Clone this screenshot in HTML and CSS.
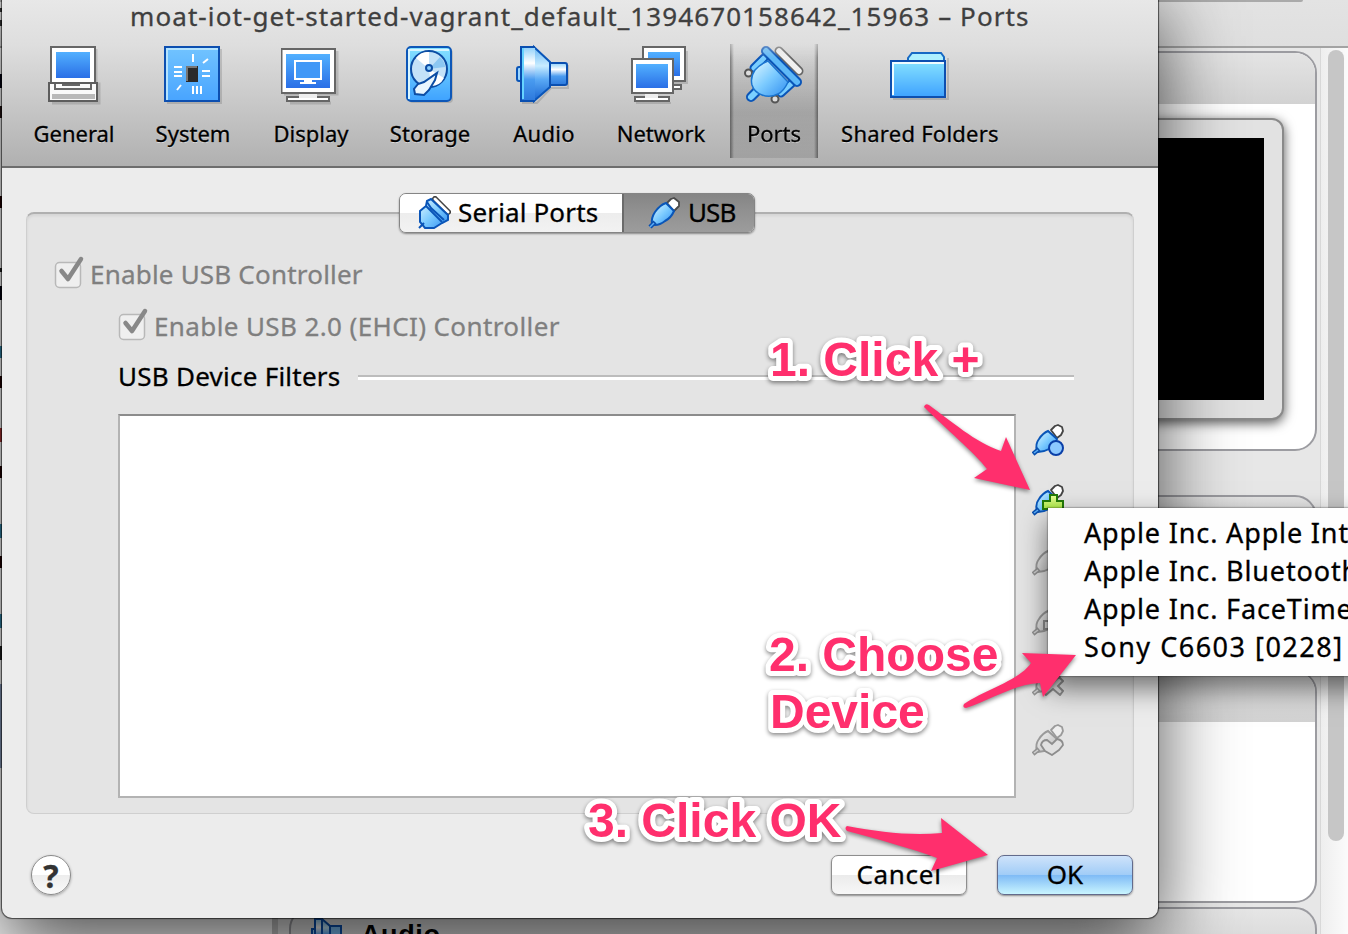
FILE: index.html
```html
<!DOCTYPE html>
<html lang="en">
<head>
<meta charset="utf-8">
<title>Ports</title>
<link rel="stylesheet" href="styles.css">
</head>
<body>
<svg class="defs" width="0" height="0">
  <defs>
    <linearGradient id="screen" x1="0" y1="0" x2="0" y2="1"><stop offset="0" stop-color="#52b0ff"/><stop offset="1" stop-color="#2a6fe6"/></linearGradient>
    <linearGradient id="sky" x1="0" y1="0" x2="0" y2="1"><stop offset="0" stop-color="#86e2ff"/><stop offset="1" stop-color="#3ea2ff"/></linearGradient>
    <linearGradient id="board" x1="0" y1="0" x2="0" y2="1"><stop offset="0" stop-color="#72c4ff"/><stop offset="1" stop-color="#48a4ff"/></linearGradient>
    <linearGradient id="horn" x1="0" y1="0" x2="0" y2="1"><stop offset="0" stop-color="#6bb8f5"/><stop offset=".35" stop-color="#c8ecff"/><stop offset=".6" stop-color="#5aa9f5"/><stop offset="1" stop-color="#1763d0"/></linearGradient>
    <linearGradient id="magnet" x1="0" y1="0" x2="0" y2="1"><stop offset="0" stop-color="#8fd0fa"/><stop offset=".3" stop-color="#ffffff"/><stop offset=".6" stop-color="#4a9cf0"/><stop offset="1" stop-color="#2c78dc"/></linearGradient>
    <linearGradient id="plug" x1="0" y1="0" x2="1" y2="1"><stop offset="0" stop-color="#e2f8ff"/><stop offset=".5" stop-color="#7ccbff"/><stop offset="1" stop-color="#2f8df0"/></linearGradient>
    <linearGradient id="grey" x1="0" y1="0" x2="1" y2="1"><stop offset="0" stop-color="#f4f4f4"/><stop offset="1" stop-color="#b9b9b9"/></linearGradient>
    <linearGradient id="green" x1="0" y1="0" x2="0" y2="1"><stop offset="0" stop-color="#eaff9a"/><stop offset="1" stop-color="#8ade1c"/></linearGradient>
    <symbol id="usb" viewBox="0 0 32 32">
      <path d="M19 6l4-4 3-1 5 4v4l-5 5z" fill="#fff" stroke="#4a4a4a" stroke-width="1.8" stroke-linejoin="round"/>
      <path d="M4 27q-1-6 3-12 5-7 11-9l8 8q-3 7-9 10-5 4-10 4z" fill="url(#plug)" stroke="#0a56b8" stroke-width="2"/>
      <path d="M2 30l5-5" stroke="#0a4fae" stroke-width="4.500"/><path d="M2 30l4-4" stroke="#5aaef8" stroke-width="1.500"/>
    </symbol>
    <symbol id="filter" viewBox="0 0 32 32">
      <path d="M19 6l4-4 3-1 4 2 1 4-2 4-4 3z" fill="#fff" stroke="#444" stroke-width="1.8" stroke-linejoin="round"/>
      <path d="M5 27q-2-7 2-12 4-6 9-8l9 8q-2 6-8 10-5 3-11 3z" fill="url(#plug)" stroke="#0a56b8" stroke-width="2"/>
      <path d="M1 30l6-5" stroke="#0a4fae" stroke-width="4.500"/><path d="M2 29l4-3" stroke="#5aaef8" stroke-width="1.500"/>
    </symbol>
    <symbol id="filter-off" viewBox="0 0 32 32">
      <path d="M19 6l4-4 3-1 4 2 1 4-2 4-4 3z" fill="#eee" stroke="#9a9a9a" stroke-width="1.8" stroke-linejoin="round"/>
      <path d="M5 27q-2-7 2-12 4-6 9-8l9 8q-2 6-8 10-5 3-11 3z" fill="url(#grey)" stroke="#9a9a9a" stroke-width="2"/>
      <path d="M1 30l6-5" stroke="#929292" stroke-width="4.500"/><path d="M2 29l4-3" stroke="#d0d0d0" stroke-width="1.500"/>
    </symbol>
  </defs>
</svg>
<div class="desktop">
  <div class="manager">
    <div class="manager-bar"><div class="manager-bar-edge"></div></div>
    <div class="manager-body">
      <div class="sidebar"></div>
      <div class="details">
        <div class="card preview"><div class="card-head"></div><div class="monitor"><div class="monitor-screen"></div></div></div>
        <div class="card middle"></div>
        <div class="card storage"><div class="card-head"></div></div>
        <div class="card audio">
          <svg width="32" height="28" viewBox="0 0 32 28"><path d="M1 12h3v12H1z" fill="#9bd6ff" stroke="#0a4fae" stroke-width="2"/><path d="M11 2l8 7v10l-8 8z" fill="url(#horn)" stroke="#0a4fae" stroke-width="2"/><path d="M19 9h11v11H19z" fill="#7cc0f7" stroke="#0a4fae" stroke-width="2"/><path d="M4 2h7v28H4z" fill="url(#magnet)" stroke="#0a4fae" stroke-width="2"/></svg>
          <span>Audio</span>
        </div>
      </div>
      <div class="scroll"><div class="thumb"></div></div>
    </div>
  </div>
  <div class="edge-strip"></div>

  <div class="dialog">
    <div class="toolbar">
      <div class="title">moat-iot-get-started-vagrant_default_1394670158642_15963 – Ports</div>
      <div class="tools">
        <div class="tool general">
          <svg width="60" height="64" viewBox="44 44 60 64">
            <path d="M52 103h47V84h-3V49" fill="none" stroke="#0002" stroke-width="3"/>
            <rect x="51" y="47" width="44" height="36" fill="#fff" stroke="#666" stroke-width="2"/>
            <rect x="56" y="52" width="34" height="26" fill="url(#screen)"/>
            <rect x="49" y="83" width="48" height="18" fill="#fafafa" stroke="#5d5d5d" stroke-width="2"/>
            <path d="M55 84v5h36v-5M62 85h18" fill="none" stroke="#666" stroke-width="2"/>
            <path d="M52 94h43v5H52z" fill="#b9b9b9"/>
          </svg><span>General</span>
        </div>
        <div class="tool system">
          <svg width="60" height="64" viewBox="163 44 60 64">
            <path d="M167 103h54V49" fill="none" stroke="#0002" stroke-width="2"/>
            <rect x="165" y="47" width="54" height="54" fill="url(#board)" stroke="#0d4fb0" stroke-width="2"/>
            <path d="M167 100V49h51" fill="none" stroke="#b4e4ff" stroke-width="2"/>
            <rect x="186" y="66" width="12" height="16" fill="#2a2a2a"/><path d="M187 81V67h10" fill="none" stroke="#777" stroke-width="2"/>
            <path d="M193 54v8M203 63l5-4M174 67h8m-8 5h8m-8 4h8M202 71h8m-8 5h8M177 90l4-5M193 86v8m4-8v8m4-8v8" stroke="#fff" stroke-width="2" fill="none"/>
          </svg><span>System</span>
        </div>
        <div class="tool display">
          <svg width="60" height="64" viewBox="281 44 60 64">
            <path d="M284 94h53V51M290 103h41" fill="none" stroke="#0002" stroke-width="3"/>
            <rect x="281.500" y="49" width="53.500" height="44" fill="#fff" stroke="#666" stroke-width="2"/>
            <rect x="286" y="54" width="44" height="34" fill="url(#screen)"/>
            <rect x="295" y="61" width="26" height="18" fill="#4299f7" stroke="#fff" stroke-width="2"/>
            <path d="M304 80h8v3h-8zM300 82h16v2h-16z" fill="#fff"/>
            <rect x="287" y="97" width="42" height="4" fill="#fff" stroke="#666" stroke-width="2"/><path d="M299 94h18v4h-18z" fill="#eee"/>
          </svg><span>Display</span>
        </div>
        <div class="tool storage-tool">
          <svg width="60" height="64" viewBox="400 44 60 64">
            <rect x="409" y="49" width="44" height="54" rx="4" fill="#0002"/>
            <rect x="407" y="47" width="44" height="54" rx="4" fill="url(#sky)" stroke="#0d57b8" stroke-width="2"/>
            <path d="M409 99V50h40" fill="none" stroke="#d8f6ff" stroke-width="2"/>
            <circle cx="429" cy="69" r="18" fill="#c4e2f8" stroke="#0c4da4" stroke-width="2"/>
            <path d="M429 69L416 58q5-7 13-6zM429 69l15 9q-4 8-13 8z" fill="#fff"/><path d="M429 69l11-12q5 5 5 10z" fill="#8cc7f2"/>
            <circle cx="429" cy="68" r="3" fill="#8bd0ff" stroke="#0c4da4" stroke-width="2"/>
            <path d="M437 73l-2 7-6 10-5 5-9-1-1-5 4-5 6-2z" fill="#eaf7ff" stroke="#0c4da4" stroke-width="2"/>
          </svg><span>Storage</span>
        </div>
        <div class="tool audio-tool">
          <svg width="60" height="64" viewBox="514 44 60 64">
            <path d="M522 103h15l14-15h17V65" fill="none" stroke="#0002" stroke-width="2"/>
            <rect x="517" y="67" width="5" height="14" rx="2" fill="#9bd6ff" stroke="#0a55b8" stroke-width="2"/>
            <path d="M534 47l16 15v25l-16 14z" fill="url(#horn)" stroke="#0a55b8" stroke-width="2"/>
            <path d="M550 63h15q2 0 2 2v18q0 2-2 2h-15z" fill="url(#magnet)" stroke="#0a4fb0" stroke-width="2"/>
            <path d="M521 47h14v54h-14z" fill="url(#magnet)"/><path d="M535 47h-14v54h14" fill="none" stroke="#0a4fb0" stroke-width="2"/><path d="M523 48v51" stroke="#66d4ff" stroke-width="2"/>
          </svg><span>Audio</span>
        </div>
        <div class="tool network">
          <svg width="60" height="64" viewBox="631 44 60 64">
            <path d="M647 83h40V51M636 103h35" fill="none" stroke="#0002" stroke-width="2"/>
            <rect x="643" y="47" width="42" height="34" fill="#fff" stroke="#666" stroke-width="2"/><rect x="648" y="52" width="32" height="24" fill="url(#screen)"/>
            <rect x="665" y="85" width="16" height="4" fill="#fff" stroke="#666" stroke-width="2"/>
            <rect x="632" y="59" width="41" height="34" fill="#fff" stroke="#666" stroke-width="2"/><rect x="636" y="64" width="32" height="24" fill="url(#screen)"/>
            <rect x="635" y="97" width="34" height="4" fill="#fff" stroke="#666" stroke-width="2"/><path d="M645 94h13v4h-13z" fill="#eee"/>
          </svg><span>Network</span>
        </div>
        <div class="tool ports selected">
          <svg width="60" height="64" viewBox="744 44 60 64">
            <path d="M779 51l20 20" stroke="#666" stroke-width="9" stroke-linecap="round"/><path d="M779 51l20 20" stroke="#f0f0f0" stroke-width="5.500" stroke-linecap="round"/>
            <path d="M764 58l-10 10M792 83l-11 10" stroke="#0a55b8" stroke-width="9" stroke-linecap="round"/><path d="M764 58l-10 10M792 83l-11 10" stroke="#79cdff" stroke-width="5" stroke-linecap="round"/>
            <circle cx="748.500" cy="73" r="3.500" fill="#ddd" stroke="#555" stroke-width="2"/><circle cx="775" cy="99" r="3.500" fill="#ddd" stroke="#555" stroke-width="2"/>
            <path d="M758 90l-7 7" stroke="#0a55b8" stroke-width="10" stroke-linecap="round"/><path d="M758 90l-7 7" stroke="#7bd0ff" stroke-width="6" stroke-linecap="round"/>
            <path d="M768 61l20 21q-4 9-10 12-8 4-16 1-8-3-10-10-2-8 3-15 5-6 13-9z" fill="url(#plug)" stroke="#1a74d0" stroke-width="1.500"/>
            <path d="M766 51l31 31" stroke="#0a55b8" stroke-width="10" stroke-linecap="round"/><path d="M766 51l31 31" stroke="#5fb9f8" stroke-width="6" stroke-linecap="round"/>
          </svg><span>Ports</span>
        </div>
        <div class="tool shared">
          <svg width="60" height="64" viewBox="890 44 60 64">
            <path d="M893 99h55V58" fill="none" stroke="#0002" stroke-width="2"/>
            <path d="M908 61v-3l4-5h29l3 4v5z" fill="#aef0ff" stroke="#1769c4" stroke-width="2"/>
            <rect x="891" y="61" width="54" height="36" fill="url(#sky)" stroke="#0d4fb0" stroke-width="2"/>
            <path d="M893 95V63h51" fill="none" stroke="#effcff" stroke-width="2"/>
          </svg><span>Shared Folders</span>
        </div>
      </div>
    </div>

    <div class="content">
      <div class="tabs">
        <div class="tab serial">
          <svg width="34" height="34" viewBox="0 0 34 34">
            <path d="M18 3l13 13" stroke="#444" stroke-width="6" stroke-linecap="round"/><path d="M18 3l13 13" stroke="#fff" stroke-width="3" stroke-linecap="round"/>
            <path d="M10 5l4-2 17 16v5l-6 3-8 5H8l-5-6V15l6-5z" fill="url(#plug)" stroke="#0a55b8" stroke-width="2"/>
            <path d="M10 6l4 6 13 12M9 10l16 16M7 27l-5 5" fill="none" stroke="#0a55b8" stroke-width="2"/>
          </svg><span>Serial Ports</span>
        </div>
        <div class="tab usb-tab"><svg width="32" height="32"><use href="#usb"/></svg><span>USB</span></div>
      </div>
      <div class="panel">
        <div class="check"><svg width="32" height="34" viewBox="0 0 32 34"><rect x="1.500" y="7.500" width="25" height="25" rx="4" fill="#efefef" stroke="#b8b8b8" stroke-width="1.500"/><path d="M7.500 16l6.500 8L27 4" fill="none" stroke="#888" stroke-width="4.500" stroke-linecap="round" stroke-linejoin="round"/></svg><span>Enable USB Controller</span></div>
        <div class="check nested"><svg width="32" height="34" viewBox="0 0 32 34"><rect x="1.500" y="7.500" width="25" height="25" rx="4" fill="#efefef" stroke="#b8b8b8" stroke-width="1.500"/><path d="M7.500 16l6.500 8L27 4" fill="none" stroke="#888" stroke-width="4.500" stroke-linecap="round" stroke-linejoin="round"/></svg><span>Enable USB 2.0 (EHCI) Controller</span></div>
        <div class="section"><span>USB Device Filters</span><div class="rule"></div></div>
        <div class="filters">
          <div class="list"></div>
          <div class="actions">
            <svg width="32" height="32" viewBox="0 0 32 32"><use href="#filter"/><circle cx="24" cy="24" r="7" fill="#8cc8ff" stroke="#0a3fa8" stroke-width="2"/></svg>
            <svg width="32" height="32" viewBox="0 0 32 32"><use href="#filter"/><path d="M18 11h7v6h6v8h-6v6h-7v-6h-7v-8h7z" fill="url(#green)" stroke="#227a08" stroke-width="2"/></svg>
            <svg width="32" height="32" viewBox="0 0 32 32"><use href="#filter-off"/></svg>
            <svg width="32" height="32" viewBox="0 0 32 32"><use href="#filter-off"/><path d="M12 17h19v8H12z" fill="#ddd" stroke="#8d8d8d" stroke-width="2"/></svg>
            <svg width="32" height="32" viewBox="0 0 32 32"><use href="#filter-off"/><path d="M15 13l6 5 6-5 4 4-5 5 5 5-3 4-7-6-7 6-3-4 5-5-5-5z" fill="#ddd" stroke="#8d8d8d" stroke-width="2"/></svg>
            <svg width="32" height="32" viewBox="0 0 32 32"><use href="#filter-off"/><path d="M9 21q1-5 6-5l5 4 5-5q6 1 6 6l-4 5-7 5-7-4z" fill="#e0e0e0" stroke="#8d8d8d" stroke-width="1.800"/></svg>
          </div>
        </div>
      </div>
      <div class="footer">
        <div class="help">?</div>
        <div class="button cancel">Cancel</div>
        <div class="button default">OK</div>
      </div>
    </div>
  </div>

  <div class="menu">
    <div>Apple Inc. Apple Int</div>
    <div>Apple Inc. Bluetooth</div>
    <div>Apple Inc. FaceTime</div>
    <div class="sony">Sony C6603 [0228]</div>
  </div>

  <svg class="annotations" width="1348" height="934" viewBox="0 0 1348 934">
    <path d="M924 407q1-4 5-2C950 420 976 443 1001 451L1006 437 1030 490 974 478 987 469C975 453 945 428 924 407z"/>
    <path d="M964 704C985 690 1020 680 1031 663L1022 653 1076 655 1043 697 1040 683C1015 684 990 700 966 708q-4 0-2-4z"/>
    <path d="M847 826C880 832 910 836 942 833L941 818 988 855 931 871 937 858C910 848 880 840 847 831q-3-3 0-5z"/>
    <text x="770" y="376">1. Click +</text>
    <text x="769" y="671">2. Choose</text>
    <text x="770" y="728">Device</text>
    <text x="588" y="837">3. Click OK</text>
  </svg>
</div>
</body>
</html>
```
FILE: styles.css
```css
* { box-sizing: border-box; }
body { margin: 0; font-family: "Noto Sans", "Open Sans", sans-serif; font-size: 26px; color: #000; }
.defs { position: absolute; }
.desktop { position: relative; width: 1348px; height: 934px; overflow: hidden; background: #e4e4e4; }
.manager { display: flex; flex-direction: column; height: 934px; }
.manager-bar { height: 48px; border-bottom: 2px solid #a3a3a3; background: linear-gradient(#e3e3e3, #dfdfdf); }
.manager-bar-edge { width: 1303px; height: 2px; border-radius: 0 0 4px 0; background: #aaa; }
.manager-body { display: flex; height: 886px; }
.sidebar { width: 278px; border-right: 6px solid #c4c4c4; background: #fff; }
.details { width: 1043px; padding: 3px 3px 0 11px; background: #e7e7e7; border-right: 1px solid #d8d8d8; }
.card { border: 2px solid #9c9ca1; border-radius: 22px; background: #fff; overflow: hidden; }
.card-head { height: 51px; background: linear-gradient(#e4e4e4, #d2d2d2); }
.preview { height: 400px; }
.monitor { width: 300px; height: 302px; margin: 14px 31px 0 auto; padding: 18px; border: 2px solid #8a8a8a; border-radius: 12px; background: #e2e2e2; box-shadow: 0 3px 12px #000a; }
.monitor-screen { height: 262px; background: #000; }
.middle { height: 170px; margin-top: 44px; background: linear-gradient(#e4e4e4, #d2d2d2 50px, #fff 50px); }
.storage { height: 233px; margin-top: 5px; }
.storage .card-head { height: 50px; }
.audio { display: flex; gap: 18px; height: 60px; margin-top: 4px; padding: 8px 20px; background: linear-gradient(#e6e6e6, #d2d2d2); font: bold 27px "Liberation Sans", sans-serif; letter-spacing: .6px; }
.audio span { padding-top: 3px; }
.scroll { width: 27px; padding: 2px 4px 0 7px; background: linear-gradient(90deg, #eee, #fbfbfb); }
.thumb { width: 16px; height: 791px; border-radius: 8px; background: #c6c6c6; }
.edge-strip { position: absolute; left: 0; top: 0; width: 2px; height: 770px; background: linear-gradient(#0000 8px, #333 8px 12px, #0000 12px 20px, #333 20px 26px, #0000 26px 74px, #001 74px 88px, #0000 88px 106px, #211 106px 118px, #0000 118px 196px, #200 196px 208px, #0000 208px 268px, #222 268px 272px, #0000 272px 286px, #001 286px 300px, #0000 300px 346px, #38a 346px 358px, #0000 358px 376px, #200 376px 388px, #0000 388px 428px, #a33 428px 442px, #0000 442px 466px, #200 466px 478px, #0000 478px 524px, #38a 524px 538px, #0000 538px 556px, #200 556px 568px, #0000 568px 614px, #38a 614px 628px, #0000 628px 646px, #222 646px 660px, #0000 660px 684px, #89b 684px 768px, #0000 768px); }

.dialog { position: absolute; left: 2px; top: -20px; width: 1156px; height: 938px; border-radius: 0 0 10px 10px; background: #ececec; box-shadow: 0 0 1px 1px #0009, 0 30px 80px rgba(0,0,0,.7); -webkit-text-stroke: .3px currentColor; }
.toolbar { height: 188px; padding-top: 20px; background: linear-gradient(#ececec, #dedede 35%, #b0b0b0); border-bottom: 2px solid #6d6d6d; }
.title { height: 44px; line-height: 32px; padding-left: 128px; color: #3f3f3f; white-space: nowrap; letter-spacing: 1.09px; }
.tools { display: flex; gap: 8px; padding-left: 16px; height: 114px; }
.tool { display: flex; flex-direction: column; align-items: center; font-size: 22px; line-height: 30px; white-space: nowrap; text-shadow: 0 1px 0 #fff8; }
.tool svg { display: block; flex: none; margin-bottom: 10px; }
.general { width: 112px; } .system, .display { width: 110px; } .storage-tool { width: 112px; } .audio-tool { width: 100px; letter-spacing: .3px; } .network { width: 118px; margin-right: 2px; } .ports { width: 88px; } .shared { width: 188px; letter-spacing: .25px; }
.selected { background: linear-gradient(90deg, #0006, #0000 4px, #0000 84px, #0006), linear-gradient(#0000, #8888 60%, #8886); -webkit-mask: linear-gradient(#0000 0, #000 14px); mask: linear-gradient(#0008 0, #000 14px); }
.content { display: flex; flex-direction: column; padding: 25px 24px 0; }
.tabs { position: relative; z-index: 1; display: flex; align-self: center; width: 356px; height: 40px; margin-right: 6px; border: 1.500px solid #858585; border-radius: 7px; box-shadow: 0 1px 2px #0006; overflow: hidden; line-height: 36px; white-space: nowrap; }
.tab { display: flex; align-items: center; }
.tab span { margin-top: -3px; }
.serial { width: 222px; padding-left: 17px; gap: 7px; background: linear-gradient(#fff 50%, #ededed 50%, #f2f2f2); letter-spacing: .15px; }
.usb-tab { width: 132px; padding-left: 24px; gap: 8px; background: linear-gradient(#858585, #929292 50%, #9c9c9c); border-left: 2px solid #6b6b6b; letter-spacing: -.9px; }
.panel { height: 602px; margin-top: -21px; padding: 44px 0 0 27px; border: 1px solid #cfcfcf; border-top: 2px solid #b0b0b0; border-radius: 8px; background: #e4e4e4; box-shadow: inset 0 2px 3px #0001; }
.check { display: flex; gap: 4px; height: 34px; margin-bottom: 18px; color: #7f7f7f; line-height: 32px; letter-spacing: .2px; white-space: nowrap; }
.check svg { flex: none; margin-top: -3px; }
.nested { margin-left: 64px; letter-spacing: .39px; }
.section { display: flex; height: 34px; margin: -2px 59px 20px 64px; line-height: 32px; letter-spacing: .25px; white-space: nowrap; }
.section span { width: 240px; flex: none; }
.rule { flex: 1; height: 5px; margin-top: 15px; border-top: 2px solid #bcbcbc; background: #fff; }
.filters { display: flex; gap: 16px; margin-left: 64px; }
.list { width: 898px; height: 384px; border: 2px solid #b3b3b3; border-top-color: #8c8c8c; background: #fff; }
.actions { display: flex; flex-direction: column; gap: 28px; padding-top: 10px; }
.footer { display: flex; align-items: center; gap: 30px; padding: 41px 1px 0 5px; }
.help { width: 40px; height: 40px; margin-right: auto; border: 1.5px solid #8a8a8a; border-radius: 50%; background: linear-gradient(#fff 50%, #ededed 50%, #fafafa); box-shadow: 0 1px 3px #0005; color: #333; font: bold 32px/40px "Noto Sans", sans-serif; text-align: center; }
.button { width: 136px; height: 40px; border: 1.500px solid #8e8e8e; border-radius: 7px; background: linear-gradient(#fff 50%, #ebebeb 50%, #f7f7f7); box-shadow: 0 1px 2px #0006; line-height: 37px; text-align: center; }
.cancel { letter-spacing: .7px; }
.default { border-color: #636b8c; background: linear-gradient(#cfe3fa, #a0ccf7 50%, #7ebaf6 50%, #c9f5ff); }

.menu { position: absolute; left: 1048px; top: 508px; width: 330px; height: 168px; padding: 6px 0 0 36px; background: #fefefe; box-shadow: 0 0 1px 1px #0003, 0 12px 26px #0008; font-size: 27px; line-height: 38px; letter-spacing: .85px; white-space: nowrap; -webkit-text-stroke: .3px currentColor; }
.sony { letter-spacing: 1.5px; }
.annotations { position: absolute; left: 0; top: 0; fill: #ff2f6d; filter: drop-shadow(0 2px 2px #0007); }
.annotations text { font: bold 48px "Liberation Sans", Arial, sans-serif; stroke: #fff; stroke-width: 10px; stroke-linejoin: round; paint-order: stroke; }
```
